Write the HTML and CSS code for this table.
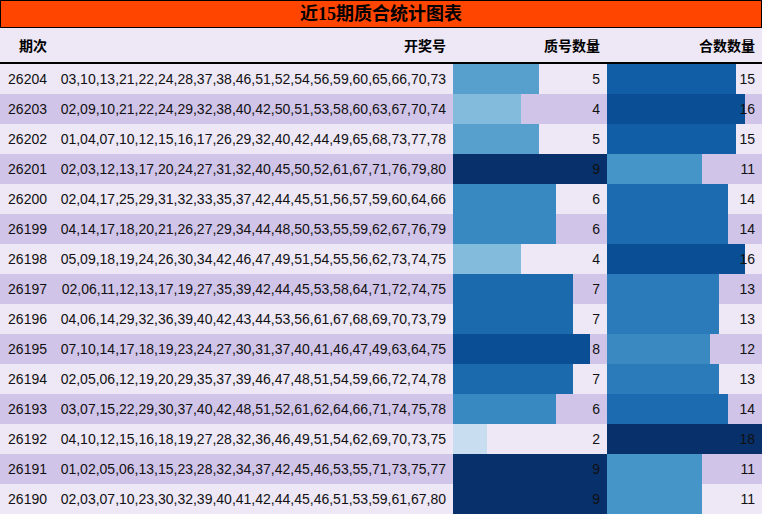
FILE: index.html
```html
<!DOCTYPE html>
<html lang="zh">
<head>
<meta charset="utf-8">
<title>近15期质合统计图表</title>
<link rel="stylesheet" href="styles.css">
</head>
<body>
<div class="chart">
  <div class="title">近15期质合统计图表</div>
  <div class="row head">
    <div class="cell">期次</div>
    <div class="cell">开奖号</div>
    <div class="cell">质号数量</div>
    <div class="cell">合数数量</div>
  </div>
  <div class="row light">
    <div class="cell">26204</div>
    <div class="cell">03,10,13,21,22,24,28,37,38,46,51,52,54,56,59,60,65,66,70,73</div>
    <div class="cell bar" style="--w:55.6%;--c:#57a0ce">5</div>
    <div class="cell bar" style="--w:83.3%;--c:#125ea6">15</div>
  </div>
  <div class="row dark">
    <div class="cell">26203</div>
    <div class="cell">02,09,10,21,22,24,29,32,38,40,42,50,51,53,58,60,63,67,70,74</div>
    <div class="cell bar" style="--w:44.4%;--c:#82bbdb">4</div>
    <div class="cell bar" style="--w:88.9%;--c:#0a4e96">16</div>
  </div>
  <div class="row light">
    <div class="cell">26202</div>
    <div class="cell">01,04,07,10,12,15,16,17,26,29,32,40,42,44,49,65,68,73,77,78</div>
    <div class="cell bar" style="--w:55.6%;--c:#57a0ce">5</div>
    <div class="cell bar" style="--w:83.3%;--c:#125ea6">15</div>
  </div>
  <div class="row dark">
    <div class="cell">26201</div>
    <div class="cell">02,03,12,13,17,20,24,27,31,32,40,45,50,52,61,67,71,76,79,80</div>
    <div class="cell bar" style="--w:100%;--c:#08306b">9</div>
    <div class="cell bar" style="--w:61.1%;--c:#4695c8">11</div>
  </div>
  <div class="row light">
    <div class="cell">26200</div>
    <div class="cell">02,04,17,25,29,31,32,33,35,37,42,44,45,51,56,57,59,60,64,66</div>
    <div class="cell bar" style="--w:66.7%;--c:#3888c1">6</div>
    <div class="cell bar" style="--w:77.8%;--c:#1c6bb0">14</div>
  </div>
  <div class="row dark">
    <div class="cell">26199</div>
    <div class="cell">04,14,17,18,20,21,26,27,29,34,44,48,50,53,55,59,62,67,76,79</div>
    <div class="cell bar" style="--w:66.7%;--c:#3888c1">6</div>
    <div class="cell bar" style="--w:77.8%;--c:#1c6bb0">14</div>
  </div>
  <div class="row light">
    <div class="cell">26198</div>
    <div class="cell">05,09,18,19,24,26,30,34,42,46,47,49,51,54,55,56,62,73,74,75</div>
    <div class="cell bar" style="--w:44.4%;--c:#82bbdb">4</div>
    <div class="cell bar" style="--w:88.9%;--c:#0a4e96">16</div>
  </div>
  <div class="row dark">
    <div class="cell">26197</div>
    <div class="cell">02,06,11,12,13,17,19,27,35,39,42,44,45,53,58,64,71,72,74,75</div>
    <div class="cell bar" style="--w:77.8%;--c:#1c6aae">7</div>
    <div class="cell bar" style="--w:72.2%;--c:#2b7bba">13</div>
  </div>
  <div class="row light">
    <div class="cell">26196</div>
    <div class="cell">04,06,14,29,32,36,39,40,42,43,44,53,56,61,67,68,69,70,73,79</div>
    <div class="cell bar" style="--w:77.8%;--c:#1c6aae">7</div>
    <div class="cell bar" style="--w:72.2%;--c:#2b7bba">13</div>
  </div>
  <div class="row dark">
    <div class="cell">26195</div>
    <div class="cell">07,10,14,17,18,19,23,24,27,30,31,37,40,41,46,47,49,63,64,75</div>
    <div class="cell bar" style="--w:88.9%;--c:#0a4e96">8</div>
    <div class="cell bar" style="--w:66.7%;--c:#3a89c1">12</div>
  </div>
  <div class="row light">
    <div class="cell">26194</div>
    <div class="cell">02,05,06,12,19,20,29,35,37,39,46,47,48,51,54,59,66,72,74,78</div>
    <div class="cell bar" style="--w:77.8%;--c:#1c6aae">7</div>
    <div class="cell bar" style="--w:72.2%;--c:#2b7bba">13</div>
  </div>
  <div class="row dark">
    <div class="cell">26193</div>
    <div class="cell">03,07,15,22,29,30,37,40,42,48,51,52,61,62,64,66,71,74,75,78</div>
    <div class="cell bar" style="--w:66.7%;--c:#3888c1">6</div>
    <div class="cell bar" style="--w:77.8%;--c:#1c6bb0">14</div>
  </div>
  <div class="row light">
    <div class="cell">26192</div>
    <div class="cell">04,10,12,15,16,18,19,27,28,32,36,46,49,51,54,62,69,70,73,75</div>
    <div class="cell bar" style="--w:22.2%;--c:#c9ddf0">2</div>
    <div class="cell bar" style="--w:100%;--c:#08306b">18</div>
  </div>
  <div class="row dark">
    <div class="cell">26191</div>
    <div class="cell">01,02,05,06,13,15,23,28,32,34,37,42,45,46,53,55,71,73,75,77</div>
    <div class="cell bar" style="--w:100%;--c:#08306b">9</div>
    <div class="cell bar" style="--w:61.1%;--c:#4695c8">11</div>
  </div>
  <div class="row light">
    <div class="cell">26190</div>
    <div class="cell">02,03,07,10,23,30,32,39,40,41,42,44,45,46,51,53,59,61,67,80</div>
    <div class="cell bar" style="--w:100%;--c:#08306b">9</div>
    <div class="cell bar" style="--w:61.1%;--c:#4695c8">11</div>
  </div>
</div>
</body>
</html>
```
FILE: styles.css
```css
html, body {
  margin: 0;
  padding: 0;
  background: #ffffff;
}

.chart {
  width: 762px;
  font-family: "Liberation Sans", "Noto Sans CJK SC", sans-serif;
  font-size: 14px;
  color: #111111;
}

.title {
  box-sizing: border-box;
  height: 28px;
  border: 1px solid #000000;
  background: #ff4500;
  color: #000000;
  text-align: center;
  font-family: "Liberation Serif", "Noto Sans CJK SC", serif;
  font-weight: bold;
  font-size: 18px;
  line-height: 26px;
}

.row {
  display: grid;
  grid-template-columns: 54px 399px 154px 155px;
  height: 30px;
}

.row.head {
  height: 34px;
  background: #ede7f6;
  border-bottom: 2px solid #000000;
  font-weight: bold;
  color: #000000;
}

.row.light {
  background: #ede7f6;
}

.row.dark {
  background: #d1c4e9;
}

.cell {
  display: flex;
  align-items: center;
  justify-content: flex-end;
  padding-right: 7px;
  white-space: nowrap;
}

.cell.bar {
  background: linear-gradient(90deg, var(--c) var(--w), transparent var(--w));
}
```
